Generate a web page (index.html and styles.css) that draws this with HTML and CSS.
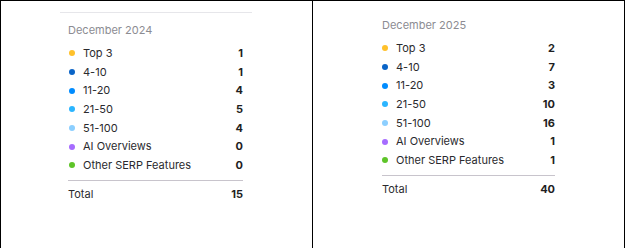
FILE: index.html
```html
<!DOCTYPE html>
<html>
<head>
<meta charset="utf-8">
<link rel="stylesheet" href="styles.css">
</head>
<body>
<div class="frame">
  <section class="panel panel-left">
    <div class="card-edge"></div>
    <div class="legend">
      <div class="period">December 2024</div>
      <ul class="rows">
        <li class="row"><span class="dot c-top3"></span><span class="label">Top 3</span><span class="val">1</span></li>
        <li class="row"><span class="dot c-4-10"></span><span class="label">4-10</span><span class="val">1</span></li>
        <li class="row"><span class="dot c-11-20"></span><span class="label">11-20</span><span class="val">4</span></li>
        <li class="row"><span class="dot c-21-50"></span><span class="label">21-50</span><span class="val">5</span></li>
        <li class="row"><span class="dot c-51-100"></span><span class="label">51-100</span><span class="val">4</span></li>
        <li class="row"><span class="dot c-ai"></span><span class="label">AI Overviews</span><span class="val">0</span></li>
        <li class="row"><span class="dot c-serp"></span><span class="label">Other SERP Features</span><span class="val">0</span></li>
      </ul>
      <div class="total"><span class="label">Total</span><span class="val">15</span></div>
    </div>
  </section>
  <section class="panel panel-right">
    <div class="legend">
      <div class="period">December 2025</div>
      <ul class="rows">
        <li class="row"><span class="dot c-top3"></span><span class="label">Top 3</span><span class="val">2</span></li>
        <li class="row"><span class="dot c-4-10"></span><span class="label">4-10</span><span class="val">7</span></li>
        <li class="row"><span class="dot c-11-20"></span><span class="label">11-20</span><span class="val">3</span></li>
        <li class="row"><span class="dot c-21-50"></span><span class="label">21-50</span><span class="val">10</span></li>
        <li class="row"><span class="dot c-51-100"></span><span class="label">51-100</span><span class="val">16</span></li>
        <li class="row"><span class="dot c-ai"></span><span class="label">AI Overviews</span><span class="val">1</span></li>
        <li class="row"><span class="dot c-serp"></span><span class="label">Other SERP Features</span><span class="val">1</span></li>
      </ul>
      <div class="total"><span class="label">Total</span><span class="val">40</span></div>
    </div>
  </section>
</div>
</body>
</html>
```

FILE: styles.css
```css
html, body {
  margin: 0;
  padding: 0;
  background: #ffffff;
}
body {
  font-family: Inter, "Noto Sans", "Liberation Sans", sans-serif;
  font-size: 11px;
  color: #2a2a2e;
}
.frame {
  display: flex;
  width: 625px;
  height: 248px;
  box-sizing: border-box;
  border-top: 1px solid #000;
  border-left: 1px solid #000;
  border-right: 1px solid #000;
}
.panel {
  box-sizing: border-box;
  height: 100%;
}
.panel-left {
  width: 312px;
  border-right: 1px solid #000;
  padding-left: 59px;
}
.panel-right {
  width: 311px;
  padding-left: 69px;
  padding-top: 17px;
}
.card-edge {
  width: 192px;
  height: 11px;
  border-bottom: 1px solid #e6e6ea;
}
.panel-left .legend {
  padding-left: 8px;
  padding-top: 10px;
  width: 175px;
}
.panel-right .legend {
  width: 173px;
}
.period {
  color: #8c8c92;
  line-height: 14px;
  height: 14px;
  margin-bottom: 7px;
}
.rows {
  list-style: none;
  margin: 0;
  padding: 0;
}
.row {
  display: flex;
  align-items: center;
  height: 18.7px;
  line-height: 18.7px;
}
.dot {
  width: 6px;
  height: 6px;
  border-radius: 50%;
  margin-left: 1px;
  margin-right: 8px;
  flex: none;
}
.panel-right .dot {
  margin-left: 0;
  margin-right: 8px;
}
.label {
  flex: 1;
}
.val {
  font-weight: 700;
  color: #1e1e22;
}
.c-top3 { background: #ffc12b; }
.c-4-10 { background: #0a64c7; }
.c-11-20 { background: #008cff; }
.c-21-50 { background: #2bb5ff; }
.c-51-100 { background: #8ccfff; }
.c-ai { background: #a66cff; }
.c-serp { background: #5ec429; }
.total {
  display: flex;
  margin-top: 5px;
  padding-top: 4px;
  border-top: 1px solid #c8c4cc;
  height: 18.7px;
  line-height: 18.7px;
}
```
